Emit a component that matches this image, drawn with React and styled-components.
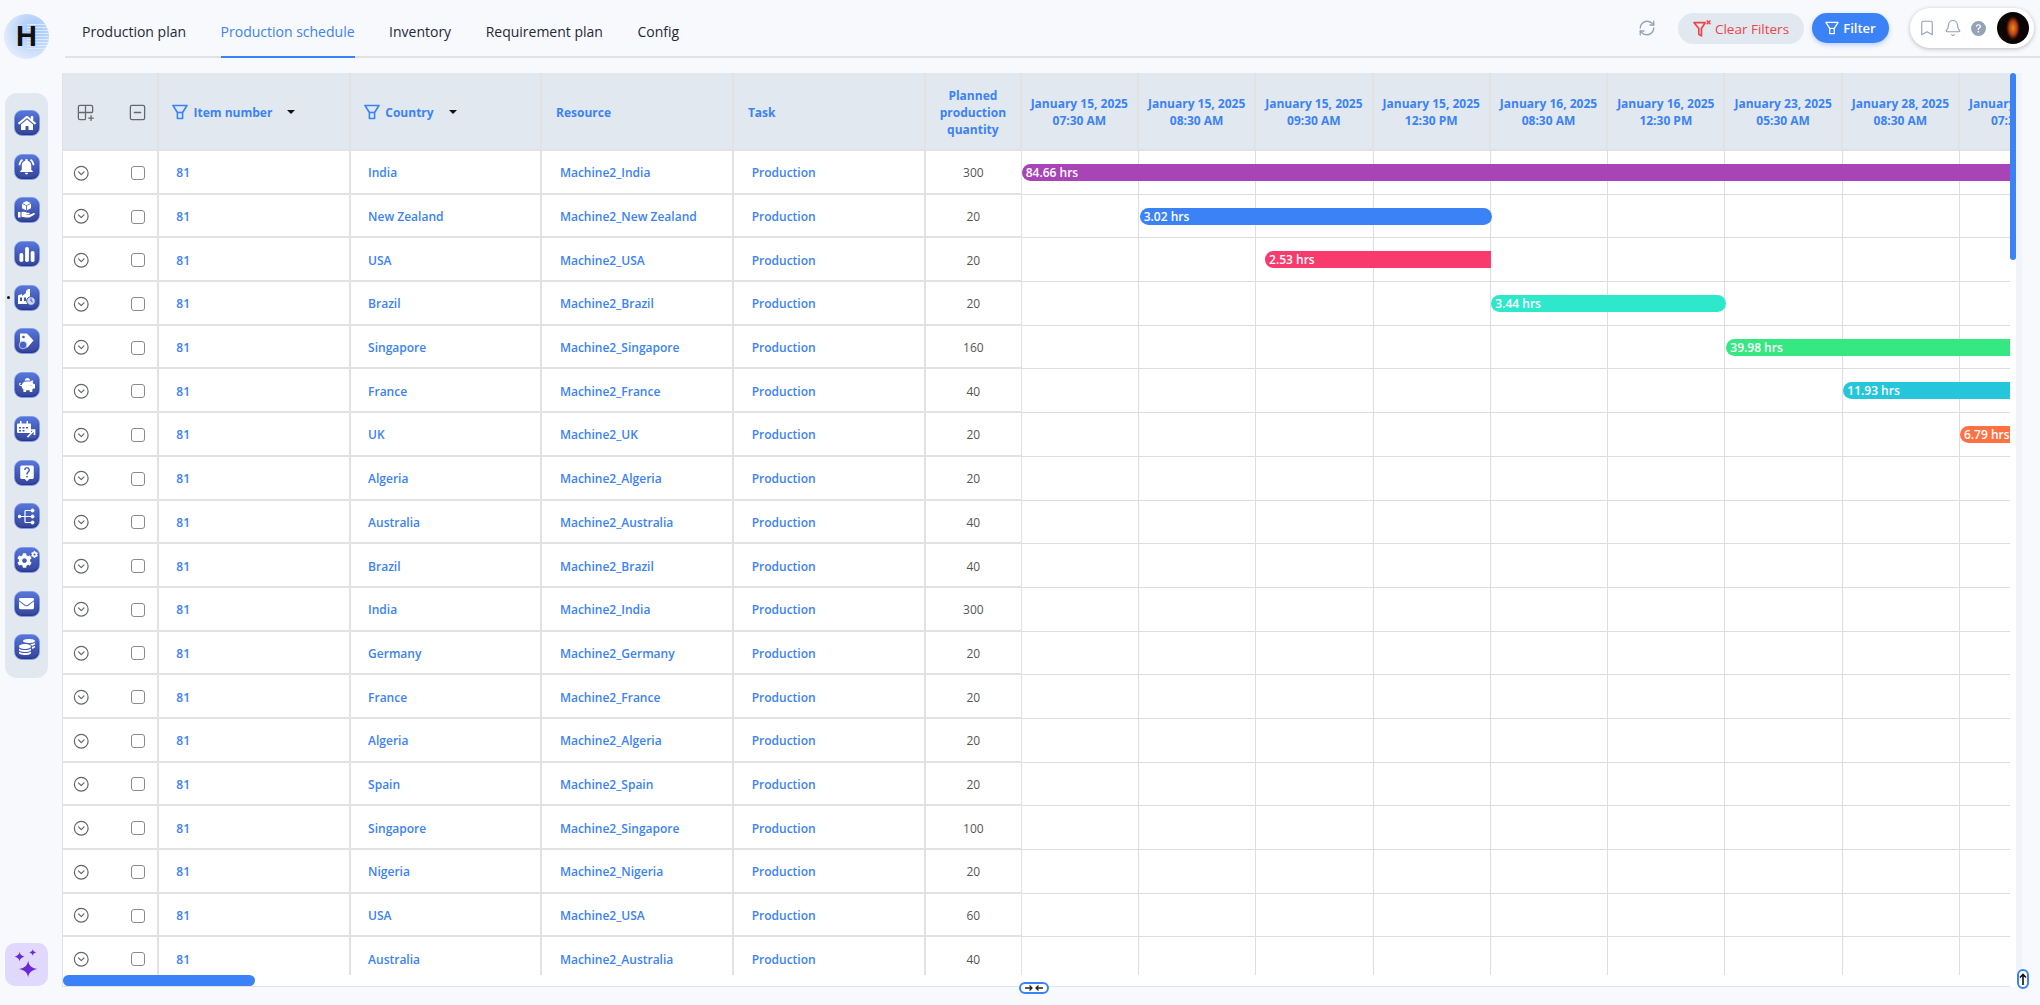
import React from "react";
import styled, { createGlobalStyle } from "styled-components";
import { Bookmark, Bell, RefreshCw, CircleChevronDown, Grid2x2Plus, SquareMinus } from "lucide-react";
import { FaHome, FaPiggyBank, FaCoins, FaEnvelope, FaCog } from "react-icons/fa";
import { MdLiveHelp, MdNotificationsActive } from "react-icons/md";
import { BsQuestionCircleFill } from "react-icons/bs";

const GlobalStyle = createGlobalStyle`
  html, body { margin: 0; padding: 0; background: #f8f9fc; }
  body { font-family: "Open Sans", "Noto Sans", sans-serif; overflow: hidden; }
  * { box-sizing: border-box; }
`;

const tabs = ["Production plan", "Production schedule", "Inventory", "Requirement plan", "Config"];

const dates = [
  ["January 15, 2025", "07:30 AM"],
  ["January 15, 2025", "08:30 AM"],
  ["January 15, 2025", "09:30 AM"],
  ["January 15, 2025", "12:30 PM"],
  ["January 16, 2025", "08:30 AM"],
  ["January 16, 2025", "12:30 PM"],
  ["January 23, 2025", "05:30 AM"],
  ["January 28, 2025", "08:30 AM"],
  ["January 30, 2025", "07:30 AM"],
];

const rows = [
  ["India", 300, { label: "84.66 hrs", left: 0, width: 1100, color: "#a844b5", open: true }],
  ["New Zealand", 20, { label: "3.02 hrs", left: 118, width: 352, color: "#3b82f6" }],
  ["USA", 20, { label: "2.53 hrs", left: 243.4, width: 226, color: "#f83b6c", square: true }],
  ["Brazil", 20, { label: "3.44 hrs", left: 469.6, width: 234.6, color: "#2ee8cc" }],
  ["Singapore", 160, { label: "39.98 hrs", left: 704.6, width: 600, color: "#36e882", open: true }],
  ["France", 40, { label: "11.93 hrs", left: 821.6, width: 600, color: "#25c6dc", open: true }],
  ["UK", 20, { label: "6.79 hrs", left: 938.3, width: 300, color: "#ff7043", open: true }],
  ["Algeria", 20],
  ["Australia", 40],
  ["Brazil", 40],
  ["India", 300],
  ["Germany", 20],
  ["France", 20],
  ["Algeria", 20],
  ["Spain", 20],
  ["Singapore", 100],
  ["Nigeria", 20],
  ["USA", 60],
  ["Australia", 40],
];

const Page = styled.div`
  display: flex;
  width: 2040px;
  height: 1005px;
  background: #f8f9fc;
  overflow: hidden;
`;

const Rail = styled.aside`
  width: 62px;
  flex: none;
  display: flex;
  flex-direction: column;
  align-items: flex-start;
  padding: 14px 0 19px 5px;
`;

const Logo = styled.div`
  width: 45px;
  height: 45px;
  margin-left: -1px;
  border-radius: 50%;
  display: flex;
  align-items: center;
  justify-content: center;
  background:
    repeating-linear-gradient(0deg, rgba(255, 255, 255, 0.55) 0 1px, transparent 1px 3px) right center / 48% 55% no-repeat,
    radial-gradient(circle at 68% 36%, #a3c5f8 0%, #bcd5fa 35%, #dde9fc 70%, #eff4fd 100%);
  color: #111;
  font-family: "Liberation Sans", sans-serif;
  font-weight: 700;
  font-size: 29px;
  line-height: 1;
`;

const SideMenu = styled.nav`
  width: 43px;
  height: 585px;
  margin-top: 34px;
  padding-top: 17px;
  border-radius: 12px;
  background: #e2e8f0;
  display: flex;
  flex-direction: column;
  align-items: center;
  gap: 17.7px;
`;

const MenuButton = styled.button`
  position: relative;
  width: 26px;
  height: 26px;
  flex: none;
  padding: 0;
  border: 1px solid #7f9cee;
  border-radius: 8px;
  background: linear-gradient(180deg, #5678dc 0%, #4358b4 55%, #38479c 100%);
  box-shadow: inset 0 -1px 2px rgba(20, 30, 90, 0.45);
  color: #fff;
  display: flex;
  align-items: center;
  justify-content: center;

  &::before {
    content: "";
    display: ${(p) => (p.$active ? "block" : "none")};
    position: absolute;
    left: -8px;
    top: 10px;
    width: 3.5px;
    height: 3.5px;
    border-radius: 50%;
    background: #111;
  }
`;

const AssistantButton = styled.button`
  width: 43px;
  height: 43px;
  margin-top: auto;
  padding: 0;
  border: 0;
  border-radius: 10px;
  background: #e0d9fd;
  display: flex;
  align-items: center;
  justify-content: center;
`;

const Main = styled.main`
  flex: 1;
  min-width: 0;
  display: flex;
  flex-direction: column;
  padding-right: 18px;
`;

const TopBar = styled.header`
  height: 57.5px;
  margin-left: 3px;
  margin-right: -18px;
  padding: 0 6px 0 17px;
  border-bottom: 2px solid #e2e2e2;
  display: flex;
  justify-content: space-between;
`;

const Tabs = styled.div`
  display: flex;
  gap: 34.5px;
`;

const Tab = styled.div`
  height: 57.5px;
  padding-top: 22px;
  font-size: 14px;
  line-height: 20px;
  white-space: nowrap;
  color: ${(p) => (p.$active ? "#3b82f6" : "#1f2937")};
  border-bottom: 2px solid ${(p) => (p.$active ? "#3b82f6" : "transparent")};
`;

const Actions = styled.div`
  display: flex;
  align-items: flex-start;
`;

const Refresh = styled(RefreshCw)`
  width: 18px;
  height: 18px;
  margin: 19px 22px 0 0;
  color: #94a3b8;
`;

const ClearButton = styled.button`
  width: 126px;
  height: 31px;
  margin-top: 13px;
  padding: 0;
  border: 0;
  border-radius: 16px;
  background: #e2e8f0;
  color: #ef4444;
  font: 400 13.5px "Open Sans", sans-serif;
  display: flex;
  align-items: center;
  justify-content: center;
  gap: 3px;
`;

const FilterButton = styled.button`
  width: 77px;
  height: 30px;
  margin: 13px 0 0 8px;
  padding: 0;
  border: 0;
  border-radius: 15px;
  background: #3b82f6;
  box-shadow: 0 2px 5px rgba(59, 130, 246, 0.35);
  color: #fff;
  font: 600 13px "Open Sans", sans-serif;
  display: flex;
  align-items: center;
  justify-content: center;
  gap: 4px;
`;

const UserPill = styled.div`
  width: 124px;
  height: 40px;
  margin: 8px 0 0 21px;
  padding: 0 5px 0 8px;
  border-radius: 20px;
  background: #fff;
  box-shadow: 0 1px 4px rgba(0, 0, 0, 0.25);
  display: flex;
  align-items: center;
  color: #94a3b8;

  svg { flex: none; }
`;

const Avatar = styled.div`
  width: 32px;
  height: 32px;
  margin-left: auto;
  border-radius: 50%;
  background: radial-gradient(ellipse 22% 38% at 50% 50%, #f08a20 0%, #b8420f 55%, #3b1206 85%, #0b0604 100%), #0b0604;
`;

const Panel = styled.section`
  position: relative;
  margin-top: 15.5px;
  height: 914px;
  background: #fff;
  display: grid;
  grid-template-columns: 1fr 12px;
  grid-template-rows: 902px 12px;
`;

const Board = styled.div`
  overflow: hidden;
  border-left: 1px solid #e2e2e2;
`;

const HeadRow = styled.div`
  display: grid;
  grid-template-columns: 95.9px repeat(4, 191.8px) 95.6px 1fr;
  height: 78px;
  width: 2020px;
  background: #e2e8f0;
  border-bottom: 2px solid #e2e2e2;
`;

const BodyRow = styled.div`
  display: grid;
  grid-template-columns: 95.9px repeat(4, 191.8px) 95.6px 1fr;
  height: 43.7px;
  width: 2020px;
`;

const HeadCell = styled.div`
  display: flex;
  align-items: center;
  justify-content: ${(p) => (p.$center ? "center" : "flex-start")};
  text-align: ${(p) => (p.$center ? "center" : "left")};
  padding: ${(p) => (p.$center ? "2px 4px 0" : "2px 0 0 13.6px")};
  border-right: 2px solid #e2e2e2;
  color: #3b82f6;
  font-size: 12px;
  font-weight: 700;
  line-height: 17px;
`;

const ToolCell = styled.div`
  display: flex;
  align-items: center;
  padding: 2px 0 0 ${(p) => p.$pad}px;
  gap: ${(p) => p.$gap}px;
  border-right: 2px solid #e2e2e2;
  border-bottom: ${(p) => (p.$body ? "2px solid #e2e2e2" : "0")};
  color: #63676e;
`;

const Tick = styled.input.attrs({ type: "checkbox" })`
  appearance: none;
  width: 14px;
  height: 14px;
  margin: 0;
  flex: none;
  border: 1.5px solid #8a8a8a;
  border-radius: 3px;
  background: #fff;
`;

const Caret = styled.span`
  width: 0;
  height: 0;
  margin-left: 15px;
  border-left: 4px solid transparent;
  border-right: 4px solid transparent;
  border-top: 4px solid #111;
`;

const Label = styled.span`
  margin-left: 5px;
  white-space: nowrap;
`;

const LinkCell = styled.div`
  display: flex;
  align-items: center;
  padding: 2px 0 0 17.4px;
  border-right: 2px solid #e2e2e2;
  border-bottom: 2px solid #e2e2e2;
  color: #3b82f6;
  font-size: 12px;
  font-weight: 600;
  white-space: nowrap;
`;

const QtyCell = styled.div`
  display: flex;
  align-items: center;
  justify-content: center;
  padding-top: 2px;
  border-right: 1px solid #e2e2e2;
  border-bottom: 2px solid #e2e2e2;
  color: #555;
  font-size: 12px;
  font-weight: 500;
`;

const Timeline = styled.div`
  position: relative;
  display: flex;
`;

const DateCell = styled.div`
  width: 117.3px;
  flex: none;
  padding-top: 2px;
  display: flex;
  align-items: center;
  justify-content: center;
  text-align: center;
  white-space: nowrap;
  border-right: 2px solid #e2e2e2;
  color: #3b82f6;
  font-size: 12px;
  font-weight: 700;
  line-height: 17px;
`;

const SlotCell = styled.div`
  width: 117.3px;
  flex: none;
  border-right: 1px solid #dedede;
  border-bottom: 1px solid #dedede;
`;

const Bar = styled.div`
  position: absolute;
  top: 13px;
  left: ${(p) => p.$left}px;
  width: ${(p) => p.$width}px;
  height: 17px;
  padding-left: 4px;
  background: ${(p) => p.$color};
  border-radius: ${(p) => (p.$open || p.$square ? "9px 0 0 9px" : "9px")};
  color: #fff;
  font-size: 12px;
  font-weight: 600;
  line-height: 18px;
  white-space: nowrap;
`;

const ScrollTrack = styled.div`
  position: relative;
  background: linear-gradient(90deg, #fff 0 6px, #f1f3f9 6px);
`;

const ScrollThumbY = styled.div`
  width: 6px;
  height: 187px;
  border-radius: 3px;
  background: #3b82f6;
`;

const BottomStrip = styled.div`
  grid-column: 1 / -1;
  border-left: 1px solid #e2e2e2;
  border-bottom: 1px solid #e2e2e2;
  margin-right: 12px;
`;

const ScrollThumbX = styled.div`
  width: 192px;
  height: 11px;
  border-radius: 6px;
  background: #3b82f6;
`;

const CollapsePill = styled.button`
  position: absolute;
  left: 957px;
  top: 908.5px;
  width: 30px;
  height: 12.5px;
  padding: 0;
  border: 2px solid #3b82f6;
  border-radius: 7px;
  background: #fff;
  color: #222;
  display: flex;
  align-items: center;
  justify-content: center;
`;

const TopPill = styled.button`
  position: absolute;
  right: -7px;
  top: 896px;
  width: 12.5px;
  height: 20px;
  padding: 0;
  border: 2px solid #3b82f6;
  border-radius: 7px;
  background: #fff;
  color: #111;
  display: flex;
  align-items: center;
  justify-content: center;
`;

const Funnel = ({ size = 16, color = "#3b82f6", width = 1.6 }) => (
  <svg width={size} height={size} viewBox="0 0 16 16" fill="none" stroke={color} strokeWidth={width} strokeLinejoin="round">
    <path d="M1 1.5h14L10.6 8.5v6H5.4v-6z" />
    <path d="M5.4 8.5h5.2" />
  </svg>
);

const ClearFunnel = () => (
  <svg width="19" height="19" viewBox="0 0 18 18" fill="none" stroke="#ef4444" strokeWidth="1.6" strokeLinejoin="round">
    <path d="M1 3.500h10.500L8 9v7l-2.500-1.500V9z" />
    <path d="M13 1.500l3.500 3.500M16.500 1.500L13 5" strokeWidth="1.400" />
  </svg>
);

const Sparkles = () => (
  <svg width="30" height="32" viewBox="0 0 26 28" fill="#6d28d9">
    <path d="M14 10c.6 4.300 2.700 6.400 8 7.500-5.300 1.100-7.400 3.200-8 7.500-.6-4.300-2.700-6.400-8-7.500 5.300-1.100 7.400-3.200 8-7.500z" />
    <path d="M6.500 2.500c.3 2.300 1.400 3.500 4.200 4.200-2.800.7-3.900 1.900-4.200 4.200-.3-2.300-1.400-3.500-4.200-4.200 2.800-.7 3.900-1.900 4.200-4.200z" />
    <path d="M18 0c.2 1.600 1 2.400 3 3-2 .6-2.800 1.400-3 3-.2-1.600-1-2.400-3-3 2-.6 2.800-1.400 3-3z" />
  </svg>
);

// menu glyphs that no icon set has in this exact shape
const HandBox = () => (
  <svg width="17" height="18" viewBox="0 0 17 18" fill="#fff">
    <path d="M8.500 0l4.500 2.300v4.900l-4.500 2.300L4 7.200V2.300z" />
    <path d="M8.500 4.700v4.800M4 2.300l4.500 2.400 4.500-2.400" stroke="#4358b4" strokeWidth=".8" fill="none" />
    <path d="M0 11h2.500v5.500H0zM3.500 11.300c2-.8 3.500-.5 5.500.5h2c.9 0 .9 1.400 0 1.400H8.500v.5h3.300l4-1.700c1-.3 1.500.8.700 1.400l-4.500 2.800c-1.500.6-5.500.3-8.500-.5z" />
  </svg>
);

const BarsGlyph = () => (
  <svg width="16" height="16" viewBox="0 0 16 16" fill="#fff">
    <rect x="0.500" y="7" width="3.800" height="9" rx="1.800" />
    <rect x="6.100" y="1" width="3.800" height="15" rx="1.800" />
    <rect x="11.700" y="5" width="3.800" height="11" rx="1.800" />
  </svg>
);

const FactoryClock = () => (
  <svg width="19" height="17" viewBox="0 0 19 17" fill="#fff">
    <path d="M1 15V6.500L5 5v2l4-3V1.500h1.500V0H13v15z" />
    <path d="M3 8.500h2V12H3zM7 8.500h2V12H7z" fill="#4358b4" />
    <circle cx="14" cy="12" r="4.300" fill="#c9d6fa" stroke="#4358b4" />
    <path d="M14 9.500V12l1.800 1" stroke="#4358b4" fill="none" />
  </svg>
);

const TagClock = () => (
  <svg width="17" height="18" viewBox="0 0 17 18" fill="#fff">
    <path d="M2 1.500h7l6.500 7-6 7H2z" />
    <circle cx="5.500" cy="5" r="1.300" fill="#4358b4" />
    <circle cx="5" cy="13" r="3.800" fill="#4a62c0" stroke="#c9d6fa" strokeWidth=".8" />
  </svg>
);

const CalendarArrow = () => (
  <svg width="19" height="18" viewBox="0 0 19 18" fill="#fff">
    <path d="M1 3.500h12a1 1 0 011 1V13H1a1 1 0 01-1-1V4.500a1 1 0 011-1zM3 1h1.500v3.500H3zM9.500 1H11v3.500H9.500z" />
    <path d="M2 7h2v1.500H2zM5.500 7h2v1.500h-2zM9 7h2v1.500H9zM2 10h2v1.500H2zM5.500 10h2v1.500h-2z" fill="#4358b4" />
    <path d="M9.500 14h9.500v4H9.500z" fill="#4358b4" stroke="none" />
    <path d="M10.500 17l6.500-6.500M12.500 10H17.500V15" stroke="#fff" strokeWidth="1.700" fill="none" />
  </svg>
);

const TreeGlyph = () => (
  <svg width="17" height="17" viewBox="0 0 17 17" fill="#fff" stroke="#fff">
    <path d="M0 8.500h8M7 2.500v12M7 2.500h6M7 8.500h6M7 14.500h6" strokeWidth="1.200" fill="none" />
    <circle cx="1.500" cy="8.500" r="1.300" />
    <circle cx="14.500" cy="2.500" r="1.500" />
    <circle cx="14.500" cy="8.500" r="1.500" />
    <circle cx="14.500" cy="14.500" r="1.500" />
  </svg>
);

const GearsWrap = styled.span`
  position: relative;
  display: flex;
  margin: 2px 4px 0 0;
`;

const SmallGear = styled(FaCog)`
  position: absolute;
  right: -6px;
  top: -2px;
`;

const Gears = () => (
  <GearsWrap>
    <FaCog size={15} />
    <SmallGear size={7} />
  </GearsWrap>
);

const menu = [
  <FaHome size={18} />,
  <MdNotificationsActive size={19} />,
  <HandBox />,
  <BarsGlyph />,
  <FactoryClock />,
  <TagClock />,
  <FaPiggyBank size={16} />,
  <CalendarArrow />,
  <MdLiveHelp size={18} />,
  <TreeGlyph />,
  <Gears />,
  <FaEnvelope size={15} />,
  <FaCoins size={16} />,
];

const BellIcon = styled(Bell)`
  margin-left: 8px;
`;

const HelpIcon = styled(BsQuestionCircleFill)`
  margin-left: 9px;
`;

const App = () => (
  <>
    <GlobalStyle />
    <Page>
      <Rail>
        <Logo>H</Logo>
        <SideMenu>
          {menu.map((icon, i) => (
            <MenuButton key={i} $active={i === 4}>
              {icon}
            </MenuButton>
          ))}
        </SideMenu>
        <AssistantButton>
          <Sparkles />
        </AssistantButton>
      </Rail>

      <Main>
        <TopBar>
          <Tabs>
            {tabs.map((t) => (
              <Tab key={t} $active={t === "Production schedule"}>
                {t}
              </Tab>
            ))}
          </Tabs>
          <Actions>
            <Refresh strokeWidth={1.8} />
            <ClearButton>
              <ClearFunnel />
              Clear Filters
            </ClearButton>
            <FilterButton>
              <Funnel size={14} color="#fff" width={1.4} />
              Filter
            </FilterButton>
            <UserPill>
              <Bookmark size={18} strokeWidth={1.5} />
              <BellIcon size={18} strokeWidth={1.6} />
              <HelpIcon size={15} />
              <Avatar />
            </UserPill>
          </Actions>
        </TopBar>

        <Panel>
          <Board>
            <HeadRow>
              <ToolCell $pad={13} $gap={33}>
                <Grid2x2Plus size={19} strokeWidth={1.6} />
                <SquareMinus size={19} strokeWidth={1.6} />
              </ToolCell>
              <HeadCell>
                <Funnel />
                <Label>Item number</Label>
                <Caret />
              </HeadCell>
              <HeadCell>
                <Funnel />
                <Label>Country</Label>
                <Caret />
              </HeadCell>
              <HeadCell>Resource</HeadCell>
              <HeadCell>Task</HeadCell>
              <HeadCell $center>
                Planned production quantity
              </HeadCell>
              <Timeline>
                {dates.map(([day, time], i) => (
                  <DateCell key={i}>
                    {day}
                    <br />
                    {time}
                  </DateCell>
                ))}
              </Timeline>
            </HeadRow>

            {rows.map(([country, qty, bar], i) => (
              <BodyRow key={i}>
                <ToolCell $pad={9.8} $gap={41.7} $body>
                  <CircleChevronDown size={16.5} strokeWidth={1.8} />
                  <Tick />
                </ToolCell>
                <LinkCell>81</LinkCell>
                <LinkCell>{country}</LinkCell>
                <LinkCell>Machine2_{country}</LinkCell>
                <LinkCell>Production</LinkCell>
                <QtyCell>{qty}</QtyCell>
                <Timeline>
                  {dates.map((_, j) => (
                    <SlotCell key={j} />
                  ))}
                  {bar && (
                    <Bar $left={bar.left} $width={bar.width} $color={bar.color} $open={bar.open} $square={bar.square}>
                      {bar.label}
                    </Bar>
                  )}
                </Timeline>
              </BodyRow>
            ))}
          </Board>
          <ScrollTrack>
            <ScrollThumbY />
          </ScrollTrack>
          <BottomStrip>
            <ScrollThumbX />
          </BottomStrip>
          <CollapsePill>
            <svg width="18" height="8" viewBox="0 0 18 8" fill="none" stroke="currentColor" strokeWidth="1.300">
              <path d="M0 4h7M4.500 1.500L7 4 4.500 6.500M18 4h-7M13.500 1.500L11 4l2.500 2.500" />
            </svg>
          </CollapsePill>
          <TopPill>
            <svg width="8" height="12" viewBox="0 0 8 12" fill="none" stroke="currentColor" strokeWidth="1.600">
              <path d="M4 12V1.500M1 4.500l3-3 3 3" />
            </svg>
          </TopPill>
        </Panel>
      </Main>
    </Page>
  </>
);

export default App;
